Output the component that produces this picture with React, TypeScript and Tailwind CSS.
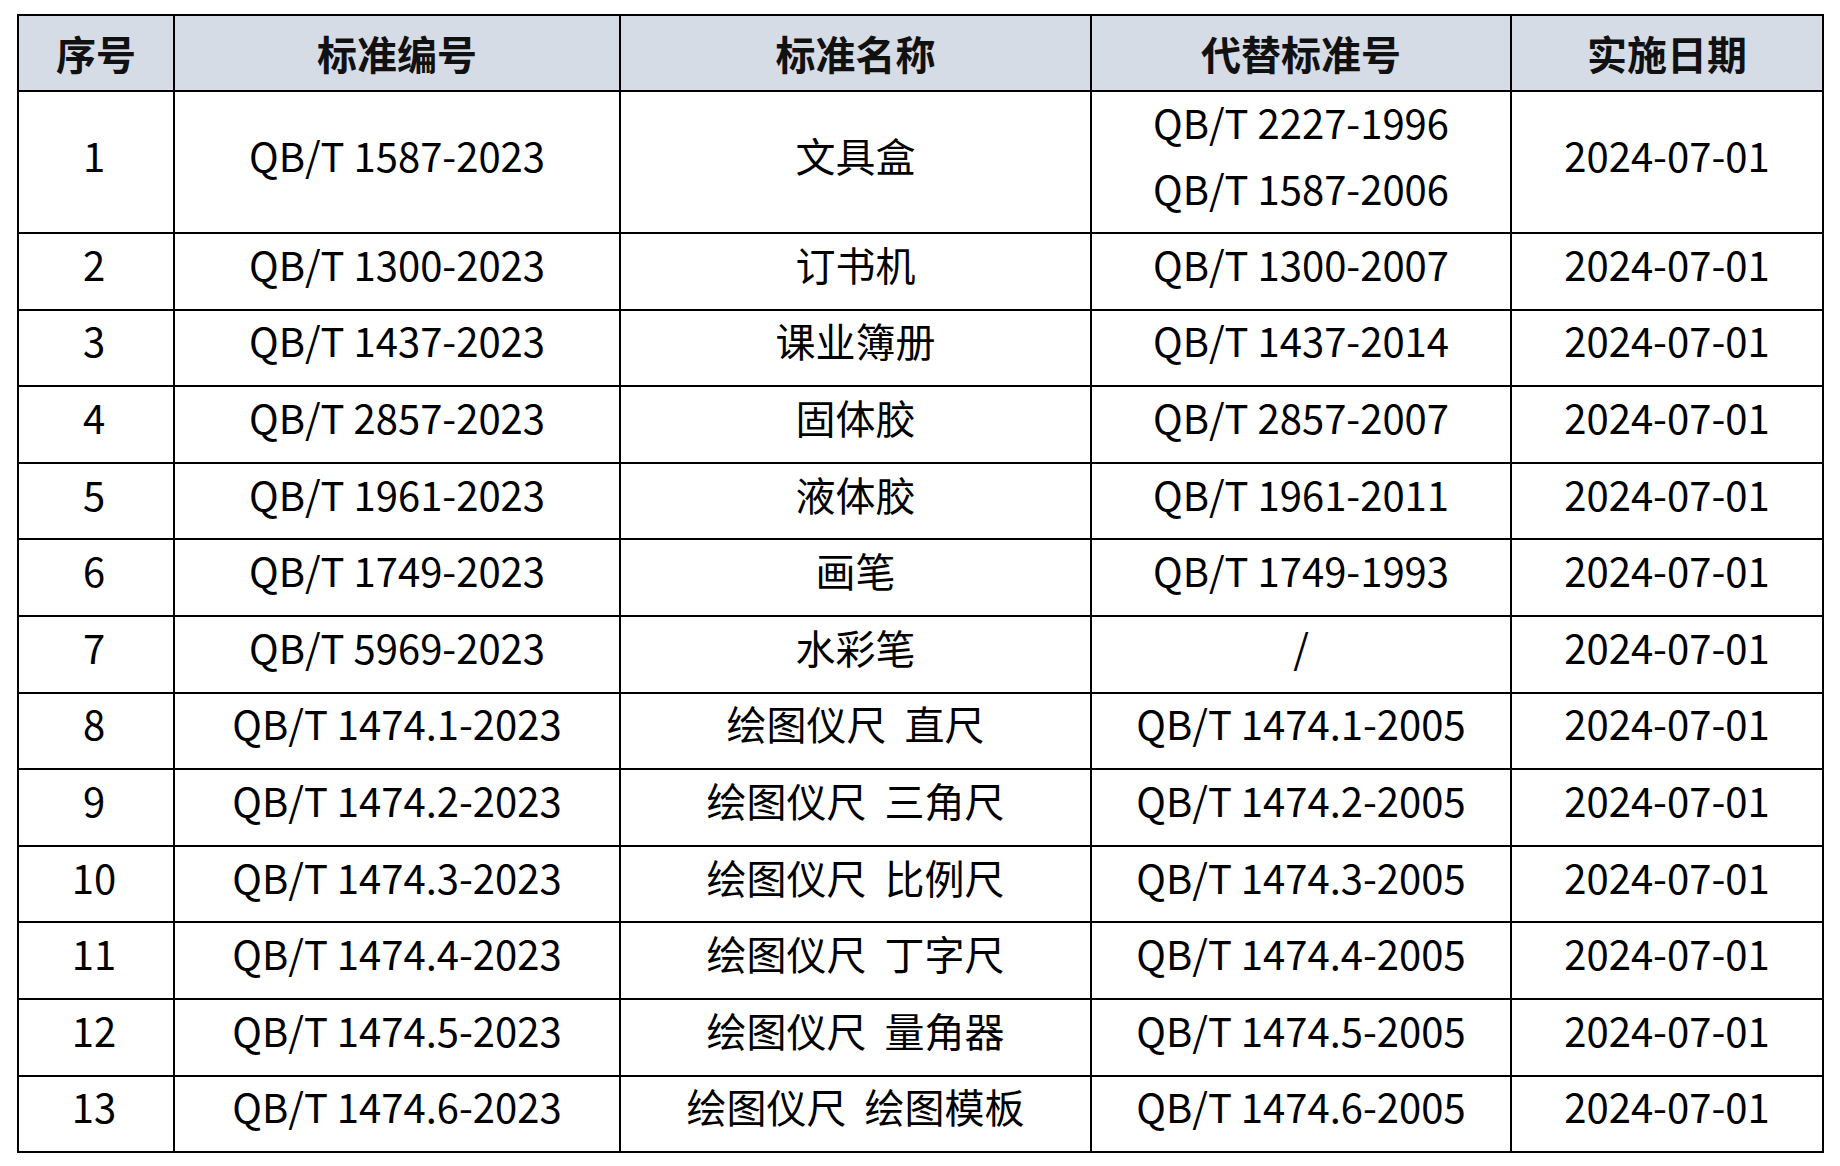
import React from 'react';

const rows = [
  { no: '1', code: 'QB/T 1587-2023', name: '文具盒', replace: ['QB/T 2227-1996', 'QB/T 1587-2006'], date: '2024-07-01' },
  { no: '2', code: 'QB/T 1300-2023', name: '订书机', replace: ['QB/T 1300-2007'], date: '2024-07-01' },
  { no: '3', code: 'QB/T 1437-2023', name: '课业簿册', replace: ['QB/T 1437-2014'], date: '2024-07-01' },
  { no: '4', code: 'QB/T 2857-2023', name: '固体胶', replace: ['QB/T 2857-2007'], date: '2024-07-01' },
  { no: '5', code: 'QB/T 1961-2023', name: '液体胶', replace: ['QB/T 1961-2011'], date: '2024-07-01' },
  { no: '6', code: 'QB/T 1749-2023', name: '画笔', replace: ['QB/T 1749-1993'], date: '2024-07-01' },
  { no: '7', code: 'QB/T 5969-2023', name: '水彩笔', replace: ['/'], date: '2024-07-01' },
  { no: '8', code: 'QB/T 1474.1-2023', name: '绘图仪尺  直尺', replace: ['QB/T 1474.1-2005'], date: '2024-07-01' },
  { no: '9', code: 'QB/T 1474.2-2023', name: '绘图仪尺  三角尺', replace: ['QB/T 1474.2-2005'], date: '2024-07-01' },
  { no: '10', code: 'QB/T 1474.3-2023', name: '绘图仪尺  比例尺', replace: ['QB/T 1474.3-2005'], date: '2024-07-01' },
  { no: '11', code: 'QB/T 1474.4-2023', name: '绘图仪尺  丁字尺', replace: ['QB/T 1474.4-2005'], date: '2024-07-01' },
  { no: '12', code: 'QB/T 1474.5-2023', name: '绘图仪尺  量角器', replace: ['QB/T 1474.5-2005'], date: '2024-07-01' },
  { no: '13', code: 'QB/T 1474.6-2023', name: '绘图仪尺  绘图模板', replace: ['QB/T 1474.6-2005'], date: '2024-07-01' },
];

const headers = ['序号', '标准编号', '标准名称', '代替标准号', '实施日期'];

export default function App() {
  return (
    <div
      className="w-[1840px] h-[1166px] bg-white pl-[17px] pt-[14px] text-black"
      style={{ fontFamily: '"Noto Sans CJK SC", "Noto Sans", sans-serif' }}
    >
      <table className="table-fixed border-collapse w-[1805px] text-[40px] leading-none">
        <colgroup>
          <col className="w-[156px]" />
          <col className="w-[446px]" />
          <col className="w-[471px]" />
          <col className="w-[420px]" />
          <col className="w-[312px]" />
        </colgroup>
        <thead>
          <tr className="h-[76px] bg-[#d6dce5]">
            {headers.map((h) => (
              <th key={h} className="border-2 border-black font-bold text-center align-middle text-[#111]">
                {h}
              </th>
            ))}
          </tr>
        </thead>
        <tbody>
          {rows.map((r) => (
            <tr key={r.no} className={r.replace.length > 1 ? 'h-[142px]' : 'h-[76.6px]'}>
              <td className="border-2 border-black text-center align-middle pb-[15px] pr-[4px]">{r.no}</td>
              <td className="border-2 border-black text-center align-middle pb-[15px]">{r.code}</td>
              <td className="border-2 border-black text-center align-middle pb-[15px] whitespace-pre">{r.name}</td>
              <td className="border-2 border-black text-center align-middle pb-[15px]">
                <div className="flex flex-col items-center gap-[26px]">
                  {r.replace.map((x) => (
                    <span key={x}>{x}</span>
                  ))}
                </div>
              </td>
              <td className="border-2 border-black text-center align-middle pb-[15px]">{r.date}</td>
            </tr>
          ))}
        </tbody>
      </table>
    </div>
  );
}
